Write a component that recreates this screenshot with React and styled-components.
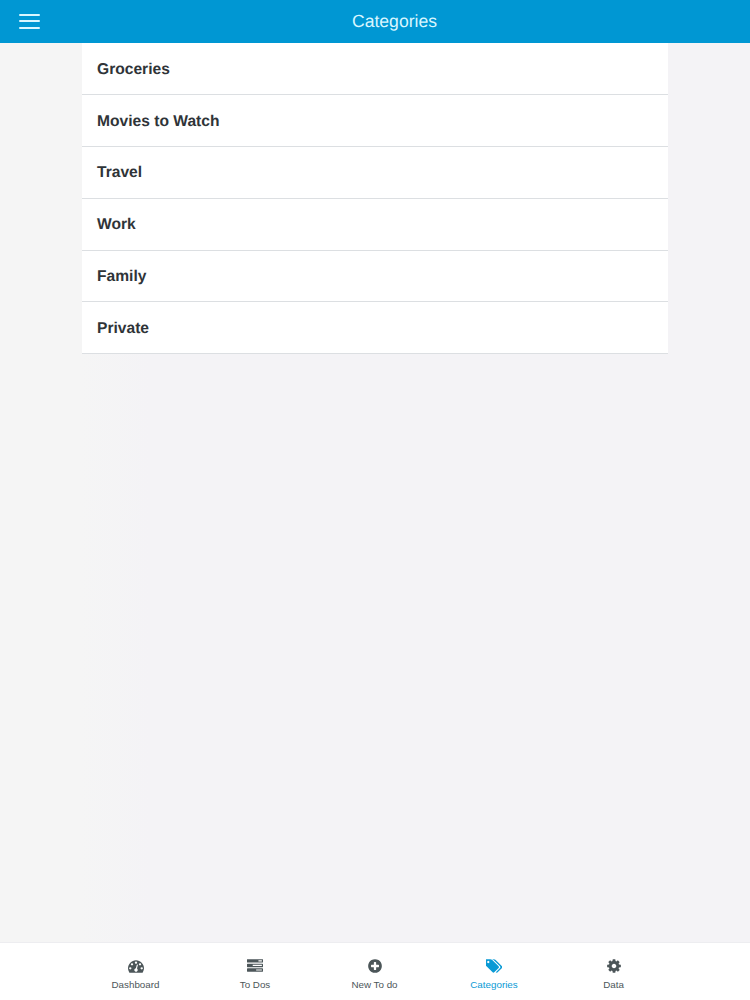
import React, { useState } from "react";
import styled, { createGlobalStyle } from "styled-components";

const GlobalStyle = createGlobalStyle`
  * {
    box-sizing: border-box;
  }
  body {
    margin: 0;
    font-family: "Liberation Sans", Arial, sans-serif;
    text-rendering: geometricPrecision;
  }
`;

const Screen = styled.div`
  height: 100vh;
  display: flex;
  flex-direction: column;
  background: linear-gradient(to right, #f5f5f5 80px, #f4f3f6 150px);
`;

const Header = styled.header`
  height: 42.5px;
  flex: none;
  display: grid;
  grid-template-columns: 39px 1fr;
  align-items: center;
  padding-left: 19px;
  background-color: #0097d3;
  color: #d9f6ff;
`;

const MenuButton = styled.button`
  width: 21px;
  height: 15px;
  padding: 0;
  border: 0;
  background: none;
  display: flex;
  flex-direction: column;
  justify-content: space-between;
  cursor: pointer;
`;

const MenuLine = styled.span`
  width: 100%;
  height: 2px;
  border-radius: 1px;
  background-color: #d9f6ff;
`;

const Title = styled.h1`
  margin: 0 19px 0 0;
  font-size: 17.6px;
  font-weight: 400;
  line-height: 20px;
  text-align: center;
`;

const Content = styled.main`
  flex: 1;
  min-height: 0;
  padding: 0 82px;
`;

const List = styled.ul`
  margin: 0;
  padding: 1px 0 0;
  list-style: none;
  background-color: #fff;
`;

const Row = styled.li`
  height: 51.75px;
  display: flex;
  align-items: center;
  padding: 2px 15px 0;
  border-bottom: 1px solid #dcdfe2;
  font-size: 15.6px;
  font-weight: 700;
  color: #2f3438;
`;

const TabBar = styled.nav`
  height: 58px;
  flex: none;
  display: flex;
  justify-content: center;
  padding-right: 1px;
  border-top: 1px solid #ededf0;
  background-color: #fff;
`;

const Tab = styled.button`
  width: 119.5px;
  padding: 15px 0 0;
  border: 0;
  background: none;
  display: flex;
  flex-direction: column;
  align-items: center;
  gap: 5px;
  font-family: inherit;
  cursor: pointer;
  color: ${(props) => (props.$active ? "#0a9ad5" : "#4c5659")};
`;

const TabIcon = styled.svg`
  height: 16px;
  display: block;
  fill: currentColor;
`;

const TabLabel = styled.span`
  font-size: 9.8px;
  line-height: 12px;
`;

const categories = [
  "Groceries",
  "Movies to Watch",
  "Travel",
  "Work",
  "Family",
  "Private",
];

const tabs = [
  {
    label: "Dashboard",
    width: 1792,
    path: "M384 1152q0-53-37.5-90.5t-90.5-37.5-90.5 37.5-37.5 90.5 37.5 90.5 90.5 37.5 90.5-37.5 37.5-90.5zm192-448q0-53-37.5-90.5t-90.5-37.5-90.5 37.5-37.5 90.5 37.5 90.5 90.5 37.5 90.5-37.5 37.5-90.5zm428 481l101-382q6-26-7.5-48.5t-38.5-29.5-48 6.5-30 39.5l-101 382q-60 5-107 43.5t-63 98.5q-20 77 20 146t117 89 146-20 89-117q16-60-6-117t-72-91zm660-33q0-53-37.5-90.5t-90.5-37.5-90.5 37.5-37.5 90.5 37.5 90.5 90.5 37.5 90.5-37.5 37.5-90.5zm-640-640q0-53-37.5-90.5t-90.5-37.5-90.5 37.5-37.5 90.5 37.5 90.5 90.5 37.5 90.5-37.5 37.5-90.5zm448 192q0-53-37.5-90.5t-90.5-37.5-90.5 37.5-37.5 90.5 37.5 90.5 90.5 37.5 90.5-37.5 37.5-90.5zm320 448q0 261-141 483-19 29-54 29h-1402q-35 0-54-29-141-221-141-483 0-182 71-348t191-286 286-191 348-71 348 71 286 191 191 286 71 348z",
  },
  {
    label: "To Dos",
    width: 1792,
    path: "M1024 1408h640v-128h-640v128zm-384-512h1024v-128h-1024v128zm640-512h384v-128h-384v128zm512 832v256q0 26-19 45t-45 19h-1664q-26 0-45-19t-19-45v-256q0-26 19-45t45-19h1664q26 0 45 19t19 45zm0-512v256q0 26-19 45t-45 19h-1664q-26 0-45-19t-19-45v-256q0-26 19-45t45-19h1664q26 0 45 19t19 45zm0-512v256q0 26-19 45t-45 19h-1664q-26 0-45-19t-19-45v-256q0-26 19-45t45-19h1664q26 0 45 19t19 45z",
  },
  {
    label: "New To do",
    width: 1792,
    path: "M1344 960v-128q0-26-19-45t-45-19h-256v-256q0-26-19-45t-45-19h-128q-26 0-45 19t-19 45v256h-256q-26 0-45 19t-19 45v128q0 26 19 45t45 19h256v256q0 26 19 45t45 19h128q26 0 45-19t19-45v-256h256q26 0 45-19t19-45zm320-64q0 209-103 385.5t-279.5 279.5-385.5 103-385.5-103-279.5-279.5-103-385.5 103-385.5 279.5-279.5 385.5-103 385.5 103 279.5 279.5 103 385.5z",
  },
  {
    label: "Categories",
    width: 1835,
    path: "M384 448q0-53-37.5-90.5t-90.5-37.5-90.5 37.5-37.5 90.5 37.5 90.5 90.5 37.5 90.5-37.5 37.5-90.5zm1067 576q0 53-37 90l-491 492q-39 37-91 37-53 0-90-37l-715-716q-38-37-64.5-101t-26.5-117v-416q0-52 38-90t90-38h416q53 0 117 26.5t102 64.5l715 714q37 39 37 91zm384 0q0 53-37 90l-491 492q-39 37-91 37-36 0-59-14t-53-45l470-470q37-37 37-90 0-52-37-91l-715-714q-38-38-102-64.5t-117-26.5h224q53 0 117 26.5t102 64.5l715 714q37 39 37 91z",
  },
  {
    label: "Data",
    width: 1792,
    path: "M1152 896q0-106-75-181t-181-75-181 75-75 181 75 181 181 75 181-75 75-181zm512-109v222q0 12-8 23t-20 13l-185 28q-19 54-39 91 35 50 107 138 10 12 10 25t-9 23q-27 37-99 108t-94 71q-12 0-26-9l-138-108q-44 23-91 38-16 136-29 186-7 28-36 28h-222q-14 0-24.5-8.5t-11.5-21.5l-28-184q-49-16-90-37l-141 107q-10 9-25 9-14 0-25-11-126-114-165-168-7-10-7-23 0-12 8-23 15-21 51-66.5t54-70.5q-27-50-41-99l-183-27q-13-2-21-12.5t-8-23.5v-222q0-12 8-23t19-13l186-28q14-46 39-92-40-57-107-138-10-12-10-24 0-10 9-23 26-36 98.5-107.5t94.5-71.5q13 0 26 10l138 107q44-23 91-38 16-136 29-186 7-28 36-28h222q14 0 24.5 8.5t11.5 21.5l28 184q49 16 90 37l142-107q9-9 24-9 13 0 25 10 129 119 165 170 7 8 7 22 0 12-8 23-15 21-51 66.5t-54 70.5q26 50 41 98l183 28q13 2 21 12.5t8 23.5z",
  },
];

const App = () => {
  const [activeTab, setActiveTab] = useState("Categories");

  return (
    <Screen>
      <GlobalStyle />
      <Header>
        <MenuButton>
          <MenuLine />
          <MenuLine />
          <MenuLine />
        </MenuButton>
        <Title>Categories</Title>
      </Header>
      <Content>
        <List>
          {categories.map((name) => (
            <Row key={name}>{name}</Row>
          ))}
        </List>
      </Content>
      <TabBar>
        {tabs.map((tab) => (
          <Tab
            key={tab.label}
            $active={tab.label === activeTab}
            onClick={() => setActiveTab(tab.label)}
          >
            <TabIcon viewBox={`0 0 ${tab.width} 1792`}>
              <path d={tab.path} />
            </TabIcon>
            <TabLabel>{tab.label}</TabLabel>
          </Tab>
        ))}
      </TabBar>
    </Screen>
  );
};

export default App;
